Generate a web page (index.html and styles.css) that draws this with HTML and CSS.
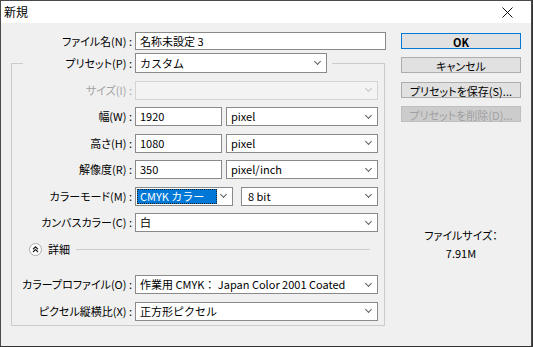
FILE: index.html
```html
<!DOCTYPE html>
<html lang="ja">
<head>
    <meta charset="UTF-8">
    <title>新規</title>
    <link rel="stylesheet" href="styles.css">
</head>
<body>
    <div class="dialog">
        <div class="titlebar">
            <span class="title">新規</span>
            <svg class="close" width="11" height="11" viewBox="0 0 11 11">
                <path d="M0.5 0.5 L10.5 10.5 M10.5 0.5 L0.5 10.5" stroke="#111" stroke-width="1" fill="none"/>
            </svg>
        </div>

        <div class="content">
            <div class="form">
                <div class="row name-row">
                    <span class="lbl">ファイル名(N) :</span>
                    <div class="field name-field">名称未設定 3</div>
                </div>

                <fieldset class="group">
                    <legend class="preset">
                        <span class="lbl">プリセット(P) :</span>
                        <div class="select preset-select"><span class="value">カスタム</span></div>
                    </legend>

                    <div class="row">
                        <span class="lbl off">サイズ(I) :</span>
                        <div class="select full disabled"><span class="value"></span></div>
                    </div>
                    <div class="row">
                        <span class="lbl">幅(W) :</span>
                        <div class="field num">1920</div>
                        <div class="select unit"><span class="value">pixel</span></div>
                    </div>
                    <div class="row">
                        <span class="lbl">高さ(H) :</span>
                        <div class="field num">1080</div>
                        <div class="select unit"><span class="value">pixel</span></div>
                    </div>
                    <div class="row">
                        <span class="lbl">解像度(R) :</span>
                        <div class="field num">350</div>
                        <div class="select unit"><span class="value">pixel/inch</span></div>
                    </div>
                    <div class="row">
                        <span class="lbl">カラーモード(M) :</span>
                        <div class="select mode"><span class="value picked">CMYK カラー</span></div>
                        <div class="select bits"><span class="value">8 bit</span></div>
                    </div>
                    <div class="row">
                        <span class="lbl">カンバスカラー(C) :</span>
                        <div class="select full"><span class="value">白</span></div>
                    </div>

                    <div class="detail">
                        <svg class="toggle" width="13" height="13" viewBox="0 0 13 13">
                            <circle cx="6.5" cy="6.5" r="6" fill="#fff" stroke="#a9a9a9"/>
                            <path d="M4 6.2 L6.5 3.8 L9 6.2 M4 9 L6.5 6.6 L9 9" stroke="#222" stroke-width="1.2" fill="none"/>
                        </svg>
                        <span class="detail-text">詳細</span>
                        <span class="detail-line"></span>
                    </div>

                    <div class="row">
                        <span class="lbl">カラープロファイル(O) :</span>
                        <div class="select full"><span class="value">作業用 CMYK： Japan Color 2001 Coated</span></div>
                    </div>
                    <div class="row last">
                        <span class="lbl">ピクセル縦横比(X) :</span>
                        <div class="select full"><span class="value">正方形ピクセル</span></div>
                    </div>
                </fieldset>
            </div>

            <div class="side">
                <button class="btn ok">OK</button>
                <button class="btn">キャンセル</button>
                <button class="btn">プリセットを保存(S)...</button>
                <button class="btn" disabled>プリセットを削除(D)...</button>

                <div class="filesize">
                    <div>ファイルサイズ：</div>
                    <div>7.91M</div>
                </div>
            </div>
        </div>
    </div>
</body>
</html>
```

FILE: styles.css
```css
body {
    margin: 0;
    padding: 0;
    background-color: #343434;
    font-family: "Noto Sans CJK JP", "Noto Sans", sans-serif;
    font-size: 11px;
    line-height: 1;
    color: #000;
}

.dialog {
    width: 532px;
    height: 346px;
    box-sizing: border-box;
    border: 1px solid #4a4a4a;
    border-bottom: none;
    background-color: #f0f0f0;
}

.titlebar {
    height: 22px;
    background-color: #fff;
    display: flex;
    align-items: center;
    justify-content: space-between;
    padding: 0 18px 0 3px;
}

.title {
    font-size: 12px;
}

.content {
    display: flex;
    padding: 9px 0 0 10px;
}

/* left side */

.form {
    width: 375px;
}

.row {
    display: flex;
    align-items: center;
    height: 19px;
    margin-bottom: 7.5px;
}

.row.last {
    margin-bottom: 0;
}

.name-row {
    height: 18px;
    margin-bottom: 0;
}

.lbl {
    width: 123px;
    flex-shrink: 0;
    box-sizing: border-box;
    padding-right: 3px;
    text-align: right;
    white-space: nowrap;
    font-feature-settings: "palt";
}

.name-row .lbl {
    width: 124px;
}

.lbl.off {
    color: #a2a2a2;
}

.field,
.select {
    height: 19px;
    box-sizing: border-box;
    border: 1px solid #8a8a8a;
    background-color: #fff;
    display: flex;
    align-items: center;
    padding-left: 4px;
    white-space: nowrap;
}

.name-field {
    width: 251px;
    height: 18px;
}

.num {
    width: 87px;
    margin-right: 4px;
}

.select {
    justify-content: space-between;
}

.select::after {
    content: "";
    width: 4px;
    height: 4px;
    border-right: 1px solid #606060;
    border-bottom: 1px solid #606060;
    transform: rotate(45deg);
    margin: 0 6px 3px 0;
    flex-shrink: 0;
}

.full {
    width: 243px;
}

.unit {
    width: 152px;
}

.mode {
    width: 98px;
    margin-right: 8px;
    padding-left: 1px;
}

.bits {
    width: 137px;
    padding-left: 6px;
}

.picked {
    width: 80px;
    height: 15px;
    box-sizing: border-box;
    background-color: #0078d7;
    color: #fff;
    outline: 1px dotted #222;
    outline-offset: -1px;
    display: flex;
    align-items: center;
    padding-left: 3px;
}

.select.disabled {
    background-color: #f3f3f3;
    border-color: #d4d4d4;
}

.select.disabled::after {
    border-color: #c4c4c4;
}

.group {
    width: 374px;
    box-sizing: border-box;
    margin: 3px 0 0 0;
    padding: 7.5px 6px 4.5px 0;
    border: 1px solid #cbcbcb;
    min-width: 0;
}

.preset {
    display: flex;
    align-items: center;
    margin-left: 11px;
    padding: 0 5px 0 0;
}

.preset .lbl {
    width: 112px;
}

.preset-select {
    width: 192px;
    height: 20px;
}

.detail {
    display: flex;
    align-items: center;
    height: 19px;
    margin: 8px 0 16px 0;
    padding-left: 17px;
}

.detail-text {
    margin-left: 6px;
}

.detail-line {
    flex: 1;
    height: 1px;
    background-color: #cbcbcb;
    margin: 0 8px 1px 6px;
}

/* right side */

.side {
    width: 120px;
    margin-left: 15px;
    padding-top: 1px;
    display: flex;
    flex-direction: column;
}

.btn {
    height: 16px;
    margin: 0 0 8.3px 0;
    padding: 0;
    border: 1px solid #adadad;
    background-color: #e1e1e1;
    font-family: inherit;
    font-size: 11px;
    color: #000;
    font-feature-settings: "palt";
}

.btn.ok {
    border-color: #0078d7;
    font-weight: bold;
}

.btn:disabled {
    background-color: #cccccc;
    border-color: #bfbfbf;
    color: #a0a0a0;
}

.filesize {
    margin-top: 96px;
    text-align: center;
    line-height: 18px;
    font-feature-settings: "palt";
}
```
